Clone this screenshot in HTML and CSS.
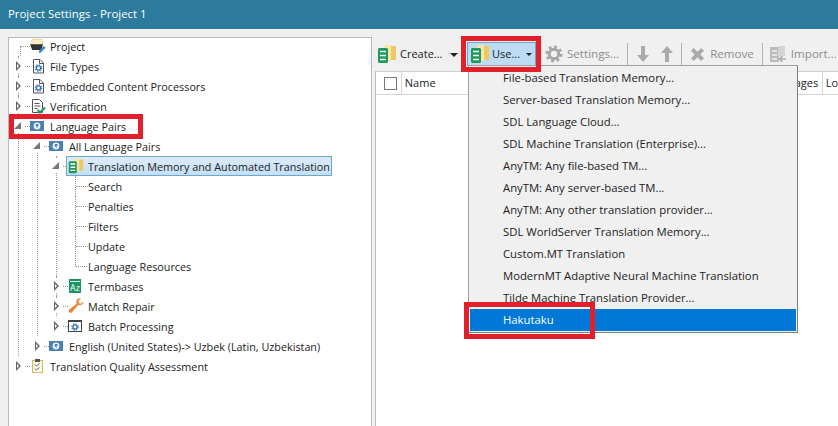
FILE: index.html
```html
<!DOCTYPE html>
<html lang="en">
<head>
    <meta charset="UTF-8">
    <title>Project Settings - Project 1</title>
    <link rel="stylesheet" href="styles.css">
</head>
<body>
    <svg class="sprites" width="0" height="0">
        <symbol id="gear" viewBox="0 0 16 16">
            <circle cx="8" cy="8" r="4.2" fill="none" stroke="currentColor" stroke-width="2.6"/>
            <circle cx="8" cy="8" r="6.4" fill="none" stroke="currentColor" stroke-width="2.4" stroke-dasharray="2.5 2.53"/>
        </symbol>
        <symbol id="tm" viewBox="0 0 20 20">
            <rect x="12" y="2" width="7" height="14" rx="1" fill="#f0c95e"/>
            <rect x="7" y="1" width="7" height="16" rx="1" fill="#f8e6ae"/>
            <path d="M2 4h8l1 1v13l-1 1H2l-1-1V5z" fill="#1c9a5b"/>
            <path d="M3 7.500h6M3 11.500h6M3 15.500h6" stroke="#fff" stroke-width="1.700"/>
        </symbol>
        <symbol id="page-gear" viewBox="0 0 16 16">
            <path d="M3.500 1.500h6.500l3.500 3.500v10h-10z" fill="#fff" stroke="#555"/>
            <path d="M9.500 1.500v4h4" fill="none" stroke="#555"/>
            <use href="#gear" x="4.500" y="6" width="8" height="8" color="#2f75b5"/>
        </symbol>
        <symbol id="verify" viewBox="0 0 16 16">
            <path d="M2.500 1.500h7l3 3v10h-10z" fill="#fff" stroke="#555"/>
            <path d="M4.500 5.500h5M4.500 8h6M4.500 10.500h3" stroke="#555"/>
            <path d="M7.500 12l2.500 2.500 5-5" fill="none" stroke="#1e9a5c" stroke-width="2.200"/>
        </symbol>
        <symbol id="globe" viewBox="0 0 16 16">
            <rect width="14" height="10" y="3" fill="#4a80b8"/>
            <circle cx="7" cy="8" r="3.400" fill="#eef3f8"/>
            <path d="M6 6h2.500v1.800l-1 .5v2l-1.200-1.800-.8-.6z" fill="#4a80b8"/>
        </symbol>
        <symbol id="project" viewBox="0 0 18 16">
            <path d="M3 .5h10l1 1v5H2v-5z" fill="#fbeec8" stroke="#e0bd5c" stroke-dasharray="1.500 1"/>
            <path d="M0 6h14.500l-1.500 6.500H2.500z" fill="#333"/>
            <path d="M10 13.500l5.500-5.500 2 2-5.500 5.500H10z" fill="#3f86c6"/>
        </symbol>
        <symbol id="wrench" viewBox="0 0 16 16">
            <path d="M15.500 3.500l-2.600 2.300-2-.7-.5-2.100L13 .5C10.500-.3 8 1.500 8.200 4.300c0 .6.200 1 .3 1.400L1.200 11.500c-1.500 1.200-.2 4 2 3.300.5-.2 1-.6 1.400-1.100l5.500-6.600c3 .8 6-1.200 5.400-3.600z" fill="#e9883a"/>
        </symbol>
        <symbol id="batch" viewBox="0 0 16 16">
            <rect x=".5" y="2.500" width="13" height="11" fill="#fff" stroke="#444"/>
            <rect y="2" width="14" height="2" fill="#444"/>
            <use href="#gear" x="3" y="5" width="8" height="8" color="#2f75b5"/>
        </symbol>
        <symbol id="qa" viewBox="0 0 16 16">
            <rect x="2.500" y="2.500" width="10" height="12" fill="#fdf5dc" stroke="#d9b860"/>
            <rect x="5" y="1" width="5" height="3" fill="#555"/>
            <path d="M5 6.500l1.500 1.500 3-2.500M5 10.500l1.500 1.500 3-2.500" fill="none" stroke="#2f75b5"/>
        </symbol>
        <symbol id="import" viewBox="0 0 18 18">
            <rect x="1" y="2" width="9" height="15" fill="#bbb"/>
            <rect x="9" y="1" width="7" height="10" fill="#d4d4d4"/>
            <path d="M3 6h5M3 10h5M3 14h5" stroke="#f0f0f0" stroke-width="1.500"/>
            <path d="M17 14h-6M13.500 11l-3 3 3 3" fill="none" stroke="#aaa" stroke-width="1.500"/>
        </symbol>
    </svg>

    <div class="titlebar">Project Settings - Project 1</div>

    <div class="main">
        <div class="tree-panel">
            <ul class="tree">
                <li class="first">
                    <div class="row"><span class="no-arrow"></span><span class="elbow-down"></span><svg class="icon"><use href="#project"/></svg><span class="label">Project</span></div>
                </li>
                <li>
                    <div class="row"><span class="arrow"></span><span class="dash"></span><svg class="icon"><use href="#page-gear"/></svg><span class="label">File Types</span></div>
                </li>
                <li>
                    <div class="row"><span class="arrow"></span><span class="dash"></span><svg class="icon"><use href="#page-gear"/></svg><span class="label">Embedded Content Processors</span></div>
                </li>
                <li>
                    <div class="row"><span class="arrow"></span><span class="dash"></span><svg class="icon"><use href="#verify"/></svg><span class="label">Verification</span></div>
                </li>
                <li>
                    <div class="row"><span class="arrow open"></span><span class="dash"></span><svg class="icon"><use href="#globe"/></svg><span class="label">Language Pairs</span></div>
                    <ul>
                        <li>
                            <div class="row"><span class="arrow open"></span><span class="dash"></span><svg class="icon"><use href="#globe"/></svg><span class="label">All Language Pairs</span></div>
                            <ul>
                                <li>
                                    <div class="row">
                                        <span class="arrow open"></span><span class="dash"></span>
                                        <span class="selected"><svg class="icon"><use href="#tm"/></svg><span class="label">Translation Memory and Automated Translation</span></span>
                                    </div>
                                    <ul>
                                        <li><div class="row leaf"><span class="dash"></span><span class="label">Search</span></div></li>
                                        <li><div class="row leaf"><span class="dash"></span><span class="label">Penalties</span></div></li>
                                        <li><div class="row leaf"><span class="dash"></span><span class="label">Filters</span></div></li>
                                        <li><div class="row leaf"><span class="dash"></span><span class="label">Update</span></div></li>
                                        <li class="last"><div class="row leaf"><span class="elbow-up"></span><span class="label">Language Resources</span></div></li>
                                    </ul>
                                </li>
                                <li>
                                    <div class="row">
                                        <span class="arrow"></span><span class="dash"></span>
                                        <svg class="icon" viewBox="0 0 16 16">
                                            <rect x="1" y="1" width="12" height="14" fill="#1b9464"/>
                                            <rect x="2" y="3" width="10" height="1" fill="#e6f4ee"/>
                                            <text x="2" y="13" class="az">Az</text>
                                        </svg>
                                        <span class="label">Termbases</span>
                                    </div>
                                </li>
                                <li>
                                    <div class="row"><span class="arrow"></span><span class="dash"></span><svg class="icon"><use href="#wrench"/></svg><span class="label">Match Repair</span></div>
                                </li>
                                <li class="last">
                                    <div class="row"><span class="arrow"></span><span class="dash"></span><svg class="icon"><use href="#batch"/></svg><span class="label">Batch Processing</span></div>
                                </li>
                            </ul>
                        </li>
                        <li class="last">
                            <div class="row"><span class="arrow"></span><span class="dash"></span><svg class="icon"><use href="#globe"/></svg><span class="label">English (United States)-&gt; Uzbek (Latin, Uzbekistan)</span></div>
                        </li>
                    </ul>
                </li>
                <li class="last">
                    <div class="row"><span class="arrow"></span><span class="dash"></span><svg class="icon"><use href="#qa"/></svg><span class="label">Translation Quality Assessment</span></div>
                </li>
            </ul>
        </div>

        <div class="content">
            <div class="toolbar">
                <div class="tool tool-create">
                    <svg class="tool-icon"><use href="#tm"/></svg>
                    <span>Create...</span>
                    <span class="caret caret-create"></span>
                </div>
                <div class="tool tool-use">
                    <svg class="tool-icon"><use href="#tm"/></svg>
                    <span>Use...</span>
                    <span class="caret"></span>
                </div>
                <div class="tool disabled tool-settings">
                    <svg class="tool-icon gear-icon"><use href="#gear"/></svg>
                    <span>Settings...</span>
                </div>
                <span class="sep"></span>
                <svg class="arrow-icon" viewBox="0 0 14 18"><path d="M5 1h4v9h4l-6 7-6-7h4z"/></svg>
                <svg class="arrow-icon" viewBox="0 0 14 18"><path d="M5 17h4V8h4L7 1 1 8h4z"/></svg>
                <span class="sep"></span>
                <div class="tool disabled tool-remove">
                    <svg class="x-icon" viewBox="0 0 16 16"><path d="M1 4l3-3 4 4 4-4 3 3-4 4 4 4-3 3-4-4-4 4-3-3 4-4z"/></svg>
                    <span>Remove</span>
                </div>
                <span class="sep"></span>
                <div class="tool disabled tool-import">
                    <svg class="tool-icon"><use href="#import"/></svg>
                    <span>Import...</span>
                </div>
            </div>
            <div class="list-panel">
                <div class="list-header">
                    <span class="check-cell"><span class="checkbox"></span></span>
                    <span class="col col-name">Name</span>
                    <span class="col col-pages">Pages</span>
                    <span class="col col-lo">Lo</span>
                </div>
            </div>
        </div>

        <ul class="menu">
            <li>File-based Translation Memory...</li>
            <li>Server-based Translation Memory...</li>
            <li>SDL Language Cloud...</li>
            <li>SDL Machine Translation (Enterprise)...</li>
            <li>AnyTM: Any file-based TM...</li>
            <li>AnyTM: Any server-based TM...</li>
            <li>AnyTM: Any other translation provider...</li>
            <li>SDL WorldServer Translation Memory...</li>
            <li>Custom.MT Translation</li>
            <li>ModernMT Adaptive Neural Machine Translation</li>
            <li>Tilde Machine Translation Provider...</li>
            <li class="active">Hakutaku</li>
        </ul>
    </div>

    <div class="callout callout-pairs"></div>
    <div class="callout callout-use"></div>
    <div class="callout callout-hakutaku"></div>
</body>
</html>
```

FILE: styles.css
```css
body {
    font-family: "Open Sans", sans-serif;
    font-size: 11px;
    color: #222;
    background-color: #f0f0f0;
    margin: 0;
    height: 426px;
    overflow: hidden;
    position: relative;
}

ul {
    list-style: none;
    margin: 0;
    padding: 0;
}

.sprites {
    position: absolute;
}

.az {
    font-family: "Open Sans", sans-serif;
    font-size: 9px;
    fill: #fff;
}

.titlebar {
    height: 29px;
    line-height: 28px;
    padding-left: 8px;
    font-size: 11.4px;
    color: #fff;
    background-color: #2c7b9c;
}

.main {
    display: flex;
    padding: 8px 0 0 8px;
}

/* tree on the left */
.tree-panel {
    width: 364px;
    height: 400px;
    flex-shrink: 0;
    font-size: 10.8px;
    background-color: #fff;
    border: 1px solid #b4bcc2;
    box-sizing: border-box;
}

.tree {
    margin: -2px 0 0 9px;
}

.tree ul {
    margin-left: 18px;
}

.tree li {
    border-left: 1px dotted #999;
}

.tree li.last, .tree li.first {
    border-left-color: transparent;
}

.row {
    display: flex;
    align-items: center;
    height: 20px;
    margin-left: -6px;
}

.row.leaf {
    margin-left: 0;
}

.arrow, .no-arrow {
    width: 12px;
    height: 14px;
    flex-shrink: 0;
    position: relative;
}

.arrow {
    background-color: #fff;
}

.arrow::after {
    content: "";
    position: absolute;
    left: 3px;
    top: 2px;
    border-left: 5px solid #666;
    border-top: 5px solid transparent;
    border-bottom: 5px solid transparent;
}

.arrow::before {
    content: "";
    position: absolute;
    left: 4px;
    top: 5px;
    z-index: 1;
    border-left: 2px solid #fff;
    border-top: 2px solid transparent;
    border-bottom: 2px solid transparent;
}

.arrow.open::before {
    display: none;
}

.arrow.open::after {
    left: 1px;
    top: 3px;
    border-left: 7px solid transparent;
    border-top: 0;
    border-bottom: 7px solid #777;
    border-right: 0 solid transparent;
}

.dash {
    width: 5px;
    height: 0;
    flex-shrink: 0;
    border-top: 1px dotted #999;
}

.row.leaf .dash {
    width: 12px;
}

.elbow-down {
    width: 10px;
    height: 10px;
    margin-left: -5px;
    box-sizing: border-box;
    flex-shrink: 0;
    align-self: flex-end;
    border-top: 1px dotted #999;
    border-left: 1px dotted #999;
}

.elbow-up {
    width: 12px;
    height: 11px;
    margin-left: -1px;
    margin-right: 1px;
    flex-shrink: 0;
    box-sizing: border-box;
    align-self: flex-start;
    border-left: 1px dotted #999;
    border-bottom: 1px dotted #999;
}

.icon {
    width: 16px;
    height: 16px;
    flex-shrink: 0;
}

.label {
    margin-left: 4px;
    white-space: nowrap;
}

.row.leaf .label {
    margin-left: 0;
}

.selected {
    display: flex;
    align-items: center;
    height: 18px;
    margin-left: -2px;
    padding: 0 1px;
    border: 1px solid #6ea6d2;
    background: linear-gradient(to bottom, #dcecf9, #c4dff4);
}

/* right side */
.content {
    flex: 1;
    margin-left: 3px;
    min-width: 0;
}

.toolbar {
    display: flex;
    align-items: center;
    height: 34px;
    white-space: nowrap;
}

.toolbar > * {
    flex-shrink: 0;
}

.tool {
    display: flex;
    align-items: center;
}

.tool span {
    margin-bottom: 2px;
}

.disabled {
    color: #8c8c8c;
    font-size: 11.6px;
}

.tool-icon {
    width: 20px;
    height: 20px;
    flex-shrink: 0;
    margin-right: 3px;
}

.tool-create {
    margin-left: 2px;
    width: 84px;
}

.tool .caret {
    width: 0;
    height: 0;
    margin: 1px 0 0 6px;
    border-left: 3px solid transparent;
    border-right: 3px solid transparent;
    border-top: 3px solid #222;
}

.tool .caret-create {
    margin-left: 8px;
    border-left-width: 4px;
    border-right-width: 4px;
    border-top-width: 4px;
}

.tool-use {
    height: 24px;
    width: 69px;
    margin-left: 6px;
    padding-left: 2px;
    box-sizing: border-box;
    border: 1px solid #6ea6d2;
    background-color: #bddcf3;
}

.tool-use .tool-icon {
    margin-right: 2px;
}

.tool-settings {
    margin-left: 9px;
}

.tool-settings + .sep {
    margin-left: 8px;
}

.gear-icon {
    width: 18px;
    height: 18px;
    margin-right: 4px;
    color: #a6a6a6;
}

.sep {
    width: 1px;
    height: 22px;
    background-color: #b0b0b0;
    margin: 0 8px;
}

.arrow-icon {
    width: 14px;
    height: 18px;
    margin: 0 1px 0 0;
    fill: #aaa;
}

.arrow-icon + .arrow-icon {
    margin-left: 9px;
    margin-right: -1px;
}

.x-icon {
    width: 15px;
    height: 15px;
    margin-right: 5px;
    fill: #aaa;
}

.tool-import {
    margin-left: -2px;
}

.tool-import .tool-icon {
    width: 18px;
    height: 18px;
    margin-right: 4px;
}

.list-panel {
    height: 360px;
    background-color: #fff;
    border-top: 1px solid #c8ced3;
    border-left: 1px solid #b4bcc2;
}

.list-header {
    display: flex;
    align-items: center;
    height: 22px;
    border-bottom: 1px solid #d5d5d5;
}

.check-cell {
    display: flex;
    align-items: center;
    width: 26px;
    height: 100%;
    padding-left: 8px;
    box-sizing: border-box;
    border-right: 1px solid #d5d5d5;
}

.checkbox {
    width: 11px;
    height: 11px;
    background-color: #fff;
    border: 1px solid #777;
}

.col {
    height: 100%;
    line-height: 22px;
    padding-left: 3px;
    white-space: nowrap;
}

.col-name {
    width: 391px;
    box-sizing: border-box;
}

.col-pages {
    width: 35px;
    box-sizing: border-box;
    border-right: 1px solid #d5d5d5;
    padding-left: 0;
}

.menu {
    position: absolute;
    left: 468px;
    top: 65px;
    width: 330px;
    height: 268px;
    padding: 1px;
    font-size: 11.3px;
    box-sizing: border-box;
    background-color: #f0f0f0;
    border: 1px solid #a0a0a0;
    border-right-color: #7f7f7f;
    border-bottom-color: #7f7f7f;
}

.menu li {
    height: 22px;
    line-height: 22px;
    padding-left: 33px;
    white-space: nowrap;
}

.menu li.active {
    color: #fff;
    background-color: #0078d7;
}

/* red annotation boxes */
.callout {
    position: absolute;
    box-sizing: border-box;
    border: 5px solid #e2202c;
}

.callout-pairs {
    left: 9px;
    top: 114px;
    width: 134px;
    height: 25px;
}

.callout-use {
    left: 461px;
    top: 36px;
    width: 80px;
    height: 36px;
}

.callout-hakutaku {
    left: 464px;
    top: 302px;
    width: 131px;
    height: 37px;
}
```
